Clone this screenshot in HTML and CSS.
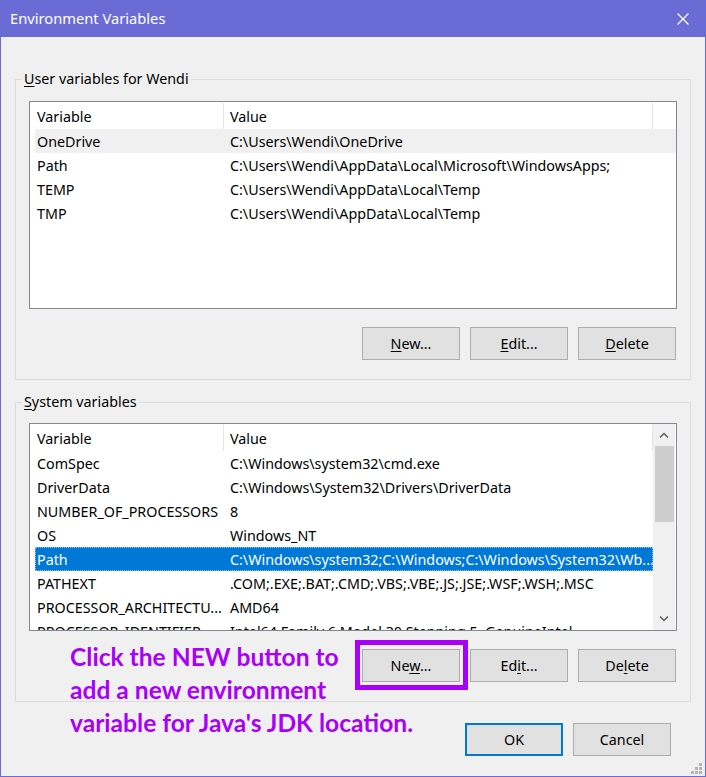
FILE: index.html
```html
<!DOCTYPE html>
<html lang="en">

<head>
  <meta charset="UTF-8">
  <meta name="viewport" content="width=device-width, initial-scale=1.0">
  <title>Environment Variables</title>
  <link rel="stylesheet" href="styles.css">
</head>

<body>
  <div class="window">
    <div class="titlebar">
      <span class="title">Environment Variables</span>
      <svg class="close" width="14" height="14" viewBox="0 0 14 14">
        <path d="M1.5 1.5L12.5 12.5M12.5 1.5L1.5 12.5" stroke="#fff" stroke-width="1.2" fill="none" />
      </svg>
    </div>

    <div class="content">
      <fieldset class="group">
        <legend><u>U</u>ser variables for Wendi</legend>
        <div class="list">
          <div class="rows">
            <div class="list-head">
              <span class="cell var">Variable</span>
              <span class="cell val">Value</span>
            </div>
            <div class="row hover">
              <span class="cell var">OneDrive</span>
              <span class="cell val">C:\Users\Wendi\OneDrive</span>
            </div>
            <div class="row">
              <span class="cell var">Path</span>
              <span class="cell val">C:\Users\Wendi\AppData\Local\Microsoft\WindowsApps;</span>
            </div>
            <div class="row">
              <span class="cell var">TEMP</span>
              <span class="cell val">C:\Users\Wendi\AppData\Local\Temp</span>
            </div>
            <div class="row">
              <span class="cell var">TMP</span>
              <span class="cell val">C:\Users\Wendi\AppData\Local\Temp</span>
            </div>
          </div>
        </div>
        <div class="buttons">
          <button class="btn"><u>N</u>ew...</button>
          <button class="btn"><u>E</u>dit...</button>
          <button class="btn"><u>D</u>elete</button>
        </div>
      </fieldset>

      <fieldset class="group system">
        <legend><u>S</u>ystem variables</legend>
        <div class="list">
          <div class="rows">
            <div class="list-head">
              <span class="cell var">Variable</span>
              <span class="cell val">Value</span>
            </div>
            <div class="row">
              <span class="cell var">ComSpec</span>
              <span class="cell val">C:\Windows\system32\cmd.exe</span>
            </div>
            <div class="row">
              <span class="cell var">DriverData</span>
              <span class="cell val">C:\Windows\System32\Drivers\DriverData</span>
            </div>
            <div class="row">
              <span class="cell var">NUMBER_OF_PROCESSORS</span>
              <span class="cell val">8</span>
            </div>
            <div class="row">
              <span class="cell var">OS</span>
              <span class="cell val">Windows_NT</span>
            </div>
            <div class="row selected">
              <span class="cell var">Path</span>
              <span class="cell val">C:\Windows\system32;C:\Windows;C:\Windows\System32\Wb...</span>
            </div>
            <div class="row">
              <span class="cell var">PATHEXT</span>
              <span class="cell val">.COM;.EXE;.BAT;.CMD;.VBS;.VBE;.JS;.JSE;.WSF;.WSH;.MSC</span>
            </div>
            <div class="row">
              <span class="cell var">PROCESSOR_ARCHITECTU...</span>
              <span class="cell val">AMD64</span>
            </div>
            <div class="row">
              <span class="cell var">PROCESSOR_IDENTIFIER</span>
              <span class="cell val">Intel64 Family 6 Model 30 Stepping 5, GenuineIntel</span>
            </div>
          </div>
          <div class="scrollbar">
            <svg class="arrow" width="10" height="6" viewBox="0 0 10 6">
              <path d="M1 5.5L5 1.5L9 5.5" stroke="#606060" stroke-width="1.5" fill="none" />
            </svg>
            <div class="thumb"></div>
            <div class="track"></div>
            <svg class="arrow" width="10" height="6" viewBox="0 0 10 6">
              <path d="M1 0.5L5 4.5L9 0.5" stroke="#606060" stroke-width="1.5" fill="none" />
            </svg>
          </div>
        </div>
        <div class="buttons">
          <button class="btn">Ne<u>w</u>...</button>
          <button class="btn">Ed<u>i</u>t...</button>
          <button class="btn">De<u>l</u>ete</button>
        </div>
      </fieldset>

      <div class="dialog-buttons">
        <button class="btn default">OK</button>
        <button class="btn">Cancel</button>
      </div>
    </div>

    <!-- callout drawn over the dialog -->
    <div class="highlight"></div>
    <p class="note">Click the NEW button to<br>add a new environment<br>variable for Java's JDK location.</p>

    <div class="grip">
      <i></i><i></i><i></i><i></i><i></i><i></i>
    </div>
  </div>
</body>

</html>
```

FILE: styles.css
```css
* {
  box-sizing: border-box;
}

body {
  margin: 0;
  background: #f0f0f0;
}

.window {
  position: relative;
  width: 706px;
  height: 777px;
  border: 1px solid #6b6bd6;
  border-top: none;
  background-color: #f0f0f0;
  font-family: "Noto Sans", "Open Sans", sans-serif;
  font-size: 14.3px;
  color: #000;
}

.titlebar {
  display: flex;
  align-items: center;
  justify-content: space-between;
  height: 37px;
  margin: 0 -1px;
  padding: 0 16px 0 10px;
  background-color: #6b6bd6;
  color: #fff;
}

.title {
  font-size: 14.7px;
  padding-bottom: 1px;
}

.close {
  display: block;
}

.content {
  padding: 32px 14px 0 14px;
}

/* group boxes */
.group {
  margin: 0;
  padding: 12px 13px 19px 13px;
  border: 1px solid #dcdcdc;
  min-width: 0;
}

.group.system {
  margin-top: 12px;
  padding-top: 11px;
}

.group legend {
  margin-left: -7px;
  padding: 0 2px;
  line-height: 20px;
  height: 20px;
}

u {
  text-decoration-thickness: 1px;
  text-underline-offset: 2px;
}

/* list views */
.list {
  display: flex;
  height: 208px;
  border: 1px solid #828790;
  background-color: #fff;
  overflow: hidden;
}

.rows {
  flex: 1;
  padding-left: 5px;
}

.list-head,
.row {
  display: grid;
  grid-template-columns: 188px 430px;
  white-space: nowrap;
}

.list-head {
  height: 27px;
  align-items: center;
  padding-top: 1px;
}

.list-head .val {
  border-left: 1px solid #e5e5e5;
  border-right: 1px solid #e5e5e5;
  height: 100%;
  display: flex;
  align-items: center;
  padding-left: 6px;
}

.row {
  height: 24px;
  line-height: 25px;
}

.cell {
  overflow: hidden;
}

.var {
  padding-left: 2px;
}

.val {
  padding-left: 7px;
}

.row.hover {
  background-color: #f0f0f0;
}

.row.selected {
  background-color: #0078d7;
  color: #fff;
  outline: 1px dotted #8fc3ee;
  outline-offset: -1px;
}

.scrollbar {
  display: flex;
  flex-direction: column;
  align-items: center;
  width: 22px;
  margin-right: 1px;
  background-color: #f0f0f0;
}

.arrow {
  display: block;
  margin: 8px 0;
}

.thumb {
  width: 19px;
  height: 76px;
  background-color: #cdcdcd;
}

.track {
  flex: 1;
}

/* buttons */
.buttons {
  display: flex;
  justify-content: flex-end;
  gap: 10px;
  margin-top: 18px;
  padding-right: 1px;
}

.btn {
  width: 98px;
  height: 33px;
  padding: 0;
  border: 1px solid #adadad;
  background-color: #e1e1e1;
  font-family: inherit;
  font-size: 14.3px;
  color: #000;
}

.btn.default {
  border: 2px solid #0078d7;
}

.dialog-buttons {
  display: flex;
  justify-content: flex-end;
  gap: 10px;
  margin-top: 21px;
  padding-right: 20px;
}

/* annotation */
.highlight {
  position: absolute;
  left: 354px;
  top: 640px;
  width: 113px;
  height: 50px;
  border: 5px solid #a800f8;
}

.note {
  position: absolute;
  left: 69px;
  top: 640px;
  margin: 0;
  font-family: Lato, "Open Sans", sans-serif;
  font-weight: bold;
  font-size: 24.6px;
  line-height: 33px;
  color: #a800f8;
}

/* resize grip */
.grip {
  position: absolute;
  right: 3px;
  bottom: 2px;
  display: grid;
  grid-template-columns: repeat(3, 3px);
  grid-template-rows: repeat(3, 3px);
  gap: 1px;
}

.grip i {
  background-color: #b4b4b4;
}

.grip i:nth-child(1) {
  grid-area: 1 / 3;
}

.grip i:nth-child(2) {
  grid-area: 2 / 2;
}

.grip i:nth-child(3) {
  grid-area: 2 / 3;
}

.grip i:nth-child(4) {
  grid-area: 3 / 1;
}

.grip i:nth-child(5) {
  grid-area: 3 / 2;
}

.grip i:nth-child(6) {
  grid-area: 3 / 3;
}
```
